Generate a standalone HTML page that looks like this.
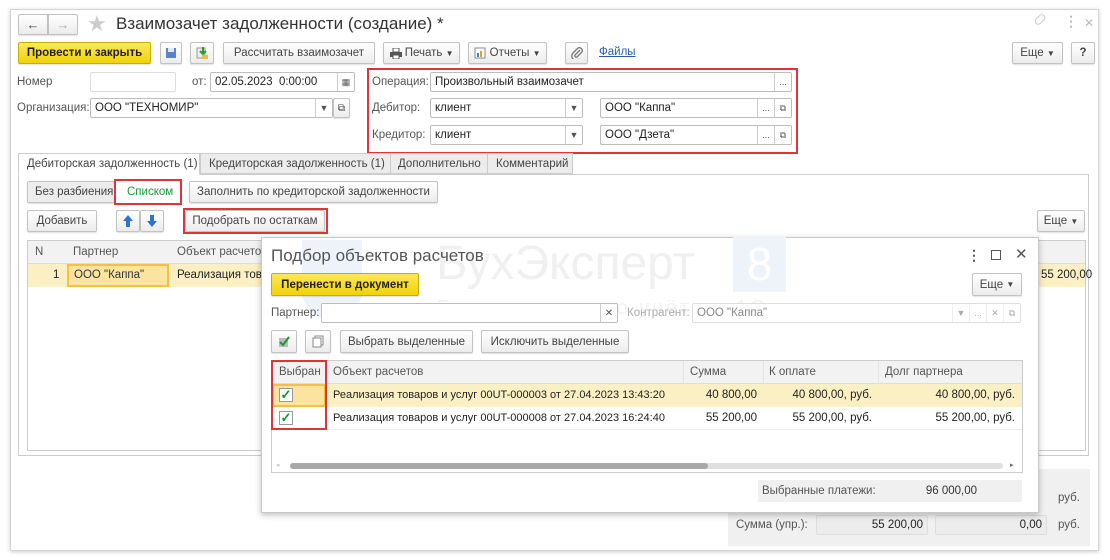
<!DOCTYPE html>
<html><head><meta charset="utf-8"><style>
*{box-sizing:border-box;margin:0;padding:0}
body{width:1110px;height:560px;background:#fff;font-family:"Liberation Sans",Arial,sans-serif;font-size:11px;color:#333;position:relative;overflow:hidden}
.a{position:absolute;white-space:nowrap}
.win{left:10px;top:9px;width:1089px;height:542px;border:1px solid #d4d4d4;background:#fff;box-shadow:0 1px 4px rgba(0,0,0,.2)}
.btn{position:absolute;height:22px;border:1px solid #c2c2c2;border-radius:2px;background:linear-gradient(#fff,#ececec);box-shadow:0 1px 1px rgba(0,0,0,.12);display:flex;align-items:center;justify-content:center;font-size:11.5px;color:#444;white-space:nowrap}
.yel{background:linear-gradient(#fbe95a,#f0d20a);border-color:#c9ad00;color:#222;font-weight:bold}
.inp{position:absolute;height:20px;border:1px solid #bdbdbd;border-radius:2px;background:#fff;padding:3px 4px;font-size:11.5px;color:#222;white-space:nowrap;overflow:hidden}
.lbl{position:absolute;font-size:11.5px;color:#555;white-space:nowrap}
.red{position:absolute;border:2px solid #e0343a}
.sub{position:absolute;top:0;height:100%;border-left:1px solid #ccc;display:flex;align-items:center;justify-content:center;font-size:9px;color:#555;background:#fff}
.th{position:absolute;font-size:11.5px;color:#555;white-space:nowrap}
.td{position:absolute;font-size:11.5px;color:#222;white-space:nowrap}
.cb{position:absolute;width:14px;height:14px;border:1px solid #999;background:#fff;color:#0a9a2a;font-size:13px;line-height:12px;text-align:center;font-weight:bold}
</style></head><body>
<div class="a win"></div>
<div class="btn" style="left:18px;top:14px;width:30px;height:21px;border-radius:2px 0 0 2px;font-size:13px">&#8592;</div>
<div class="btn" style="left:48px;top:14px;width:30px;height:21px;border-radius:0 2px 2px 0;color:#aaa;font-size:13px">&#8594;</div>
<div class="a" style="left:87px;top:11px;font-size:22px;color:#ccc">&#9733;</div>
<div class="a" style="left:116px;top:14px;font-size:17px;color:#333">Взаимозачет задолженности (создание) *</div>
<div class="a" style="left:1034px;top:16px;width:12px;height:7px;border:1.5px solid #ccc;border-radius:4px;transform:rotate(-45deg)"></div>
<div class="a" style="left:1064px;top:13px;font-size:14px;color:#bbb;font-weight:bold">&#8942;</div>
<div class="a" style="left:1084px;top:16px;font-size:12px;color:#bbb">&#10005;</div>
<div class="btn yel" style="left:18px;top:42px;width:133px">Провести и закрыть</div>
<div class="btn" style="left:160px;top:42px;width:22px"><svg width="12" height="12"><rect x="1" y="1" width="10" height="10" fill="#5a84c4"/><rect x="3" y="1" width="6" height="4" fill="#dfe8f5"/></svg></div>
<div class="btn" style="left:190px;top:42px;width:24px"><svg width="14" height="14"><rect x="2" y="2" width="8" height="10" fill="#eee" stroke="#999"/><path d="M8 1v6M5 5l3 3 3-3" stroke="#2a9a30" stroke-width="2" fill="none"/><rect x="7" y="9" width="6" height="4" fill="#e8c040"/></svg></div>
<div class="btn" style="left:223px;top:42px;width:152px">Рассчитать взаимозачет</div>
<div class="btn" style="left:383px;top:42px;width:77px"><svg width="12" height="11"><rect x="3" y="0" width="6" height="4" fill="#fff" stroke="#555"/><rect x="0" y="4" width="12" height="5" fill="#555"/><rect x="3" y="7" width="6" height="4" fill="#fff" stroke="#555"/></svg>&nbsp;Печать&nbsp;<span style="font-size:8px">&#9660;</span></div>
<div class="btn" style="left:468px;top:42px;width:79px"><svg width="12" height="12"><rect x="1" y="1" width="10" height="10" fill="#fff" stroke="#888"/><rect x="3" y="6" width="2" height="4" fill="#4a78b8"/><rect x="6" y="4" width="2" height="6" fill="#e0a020"/></svg>&nbsp;Отчеты&nbsp;<span style="font-size:8px">&#9660;</span></div>
<div class="btn" style="left:565px;top:42px;width:23px"><svg width="12" height="12"><path d="M9 3L4 8a1.5 1.5 0 0 0 2 2l5-5a3 3 0 0 0-4-4L2 6a4 4 0 0 0 6 6" stroke="#777" stroke-width="1.3" fill="none"/></svg></div>
<div class="a" style="left:599px;top:46px;color:#2a5db0;text-decoration:underline;font-size:11.5px">Файлы</div>
<div class="btn" style="left:1012px;top:42px;width:51px">Еще&nbsp;<span style="font-size:8px">&#9660;</span></div>
<div class="btn" style="left:1071px;top:42px;width:24px;font-weight:bold">?</div>
<div class="lbl" style="left:17px;top:76px">Номер</div>
<div class="inp" style="left:90px;top:72px;width:86px;border-color:#ddd"></div>
<div class="lbl" style="left:192px;top:76px">от:</div>
<div class="inp" style="left:210px;top:72px;width:145px">02.05.2023&nbsp;&nbsp;0:00:00<div class="sub" style="right:0;width:17px">&#9638;</div></div>
<div class="lbl" style="left:17px;top:102px">Организация:</div>
<div class="inp" style="left:90px;top:98px;width:243px">ООО "ТЕХНОМИР"<div class="sub" style="right:0;width:17px">&#9660;</div></div>
<div class="btn" style="left:333px;top:98px;width:17px;height:20px;font-size:10px">&#10697;</div>
<div class="red" style="left:367px;top:68px;width:431px;height:86px"></div>
<div class="lbl" style="left:372px;top:76px">Операция:</div>
<div class="inp" style="left:430px;top:72px;width:362px">Произвольный взаимозачет<div class="sub" style="right:0;width:17px">...</div></div>
<div class="lbl" style="left:372px;top:102px">Дебитор:</div>
<div class="inp" style="left:430px;top:98px;width:153px">клиент<div class="sub" style="right:0;width:17px">&#9660;</div></div>
<div class="inp" style="left:600px;top:98px;width:192px">ООО "Каппа"<div class="sub" style="right:17px;width:17px">...</div><div class="sub" style="right:0;width:17px">&#10697;</div></div>
<div class="lbl" style="left:372px;top:129px">Кредитор:</div>
<div class="inp" style="left:430px;top:125px;width:153px">клиент<div class="sub" style="right:0;width:17px">&#9660;</div></div>
<div class="inp" style="left:600px;top:125px;width:192px">ООО "Дзета"<div class="sub" style="right:17px;width:17px">...</div><div class="sub" style="right:0;width:17px">&#10697;</div></div>
<div class="a" style="left:18px;top:174px;width:1071px;height:282px;border:1px solid #ccc"></div>
<div class="a" style="left:18px;top:153px;width:182px;height:22px;border:1px solid #ccc;border-bottom:1px solid #fff;background:#fff;padding:4px 0 0 8px;color:#444;font-size:11.5px">Дебиторская задолженность (1)</div>
<div class="a" style="left:200px;top:153px;width:191px;height:21px;border:1px solid #ccc;background:#ececec;padding:4px 0 0 8px;color:#444;font-size:11.5px">Кредиторская задолженность (1)</div>
<div class="a" style="left:390px;top:153px;width:98px;height:21px;border:1px solid #ccc;background:#ececec;padding:4px 0 0 7px;color:#444;font-size:11.5px">Дополнительно</div>
<div class="a" style="left:487px;top:153px;width:86px;height:21px;border:1px solid #ccc;background:#ececec;padding:4px 0 0 8px;color:#444;font-size:11.5px">Комментарий</div>
<div class="btn" style="left:27px;top:181px;width:153px;justify-content:flex-start;padding-left:7px;background:#ececec">Без разбиения</div>
<div class="a" style="left:115px;top:181px;width:65px;height:22px;background:#fff;color:#1a9a3a;padding:5px 0 0 12px;font-size:11.5px">Списком</div>
<div class="red" style="left:114px;top:179px;width:68px;height:26px"></div>
<div class="btn" style="left:189px;top:181px;width:249px">Заполнить по кредиторской задолженности</div>
<div class="btn" style="left:27px;top:210px;width:70px">Добавить</div>
<div class="btn" style="left:116px;top:210px;width:24px"><svg width="10" height="12"><path d="M5 0L0 6h3v6h4V6h3z" fill="#2c74d0"/></svg></div>
<div class="btn" style="left:140px;top:210px;width:24px"><svg width="10" height="12"><path d="M5 12L0 6h3V0h4v6h3z" fill="#2c74d0"/></svg></div>
<div class="btn" style="left:185px;top:210px;width:140px">Подобрать по остаткам</div>
<div class="red" style="left:183px;top:208px;width:145px;height:26px"></div>
<div class="btn" style="left:1037px;top:210px;width:48px">Еще&nbsp;<span style="font-size:8px">&#9660;</span></div>
<div class="a" style="left:27px;top:240px;width:1059px;height:211px;border:1px solid #ccc"></div>
<div class="a" style="left:28px;top:241px;width:1057px;height:23px;background:#f2f2f2;border-bottom:1px solid #ddd"></div>
<div class="th" style="left:35px;top:246px">N</div>
<div class="th" style="left:73px;top:246px">Партнер</div>
<div class="th" style="left:177px;top:246px">Объект расчетов</div>
<div class="a" style="left:28px;top:264px;width:1057px;height:23px;background:#fbefc4"></div>
<div class="td" style="left:53px;top:269px">1</div>
<div class="a" style="left:67px;top:264px;width:102px;height:23px;border:2px solid #f2c240;background:#fbe3a0;padding:3px 0 0 5px;font-size:11.5px">ООО "Каппа"</div>
<div class="td" style="left:177px;top:269px">Реализация товаров</div>
<div class="td" style="left:1041px;top:269px">55 200,00</div>
<div class="a" style="left:728px;top:469px;width:362px;height:77px;background:#f0f0f0"></div>
<div class="lbl" style="left:1058px;top:492px">руб.</div>
<div class="lbl" style="left:736px;top:519px">Сумма (упр.):</div>
<div class="inp" style="left:816px;top:515px;width:112px;background:#ececec;border-color:#ddd;text-align:right">55 200,00</div>
<div class="inp" style="left:935px;top:515px;width:112px;background:#ececec;border-color:#ddd;text-align:right">0,00</div>
<div class="lbl" style="left:1058px;top:519px">руб.</div>
<!-- dialog -->
<div class="a" style="left:261px;top:237px;width:778px;height:276px;background:#fff;border:1px solid #c8c8c8;box-shadow:0 2px 6px rgba(0,0,0,.25)"></div>
<div class="a" style="left:302px;top:240px;width:60px;height:80px;background:#eef3fa;border-radius:0 0 30px 30px"></div>
<div class="a" style="left:436px;top:236px;font-size:48px;color:#f0f0f0">БухЭксперт</div>
<div class="a" style="left:733px;top:237px;width:53px;height:55px;background:#eef3fa;color:#fff;font-size:46px;text-align:center">8</div>
<div class="a" style="left:437px;top:297px;font-size:20px;color:#f2f2f2;letter-spacing:3px">База ответов по учёту в 1С</div>
<div class="a" style="left:271px;top:246px;font-size:17px;color:#555">Подбор объектов расчетов</div>
<div class="a" style="left:967px;top:247px;font-size:14px;color:#555;font-weight:bold">&#8942;</div>
<div class="a" style="left:991px;top:250px;width:10px;height:10px;border:1.5px solid #555"></div>
<div class="a" style="left:1015px;top:245px;font-size:15px;color:#555">&#10005;</div>
<div class="btn yel" style="left:271px;top:273px;width:148px;height:23px">Перенести в документ</div>
<div class="btn" style="left:972px;top:273px;width:50px;height:23px">Еще&nbsp;<span style="font-size:8px">&#9660;</span></div>
<div class="lbl" style="left:271px;top:307px">Партнер:</div>
<div class="inp" style="left:321px;top:303px;width:297px">&nbsp;<div class="sub" style="right:0;width:17px;font-size:10px">&#10005;</div></div>
<div class="lbl" style="left:627px;top:307px;color:#aaa">Контрагент:</div>
<div class="inp" style="left:692px;top:303px;width:329px;border-color:#ddd;color:#888">ООО "Каппа"<div class="sub" style="right:51px;width:17px;border-color:#eee;color:#aaa">&#9660;</div><div class="sub" style="right:34px;width:17px;border-color:#eee;color:#aaa">...</div><div class="sub" style="right:17px;width:17px;border-color:#eee;color:#aaa">&#10005;</div><div class="sub" style="right:0;width:17px;border-color:#eee;color:#aaa">&#10697;</div></div>
<div class="btn" style="left:271px;top:330px;width:26px;height:23px"><svg width="12" height="13"><rect x="1" y="3" width="9" height="9" fill="#bbb"/><path d="M2 7l3 3 6-8" stroke="#1a9a2a" stroke-width="2" fill="none"/></svg></div>
<div class="btn" style="left:305px;top:330px;width:26px;height:23px"><svg width="12" height="13"><rect x="3" y="1" width="8" height="9" fill="#fff" stroke="#888"/><rect x="1" y="3" width="8" height="9" fill="#fff" stroke="#888"/></svg></div>
<div class="btn" style="left:340px;top:330px;width:133px;height:23px">Выбрать выделенные</div>
<div class="btn" style="left:481px;top:330px;width:148px;height:23px">Исключить выделенные</div>
<div class="a" style="left:271px;top:360px;width:752px;height:113px;border:1px solid #ccc"></div>
<div class="a" style="left:272px;top:361px;width:750px;height:23px;background:#f2f2f2;border-bottom:1px solid #ddd"></div>
<div class="a" style="left:326px;top:361px;width:1px;height:23px;background:#ddd"></div>
<div class="a" style="left:683px;top:361px;width:1px;height:46px;background:#e4e4e4"></div>
<div class="a" style="left:763px;top:361px;width:1px;height:46px;background:#e4e4e4"></div>
<div class="a" style="left:878px;top:361px;width:1px;height:46px;background:#e4e4e4"></div>
<div class="th" style="left:279px;top:366px">Выбран</div>
<div class="th" style="left:333px;top:366px">Объект расчетов</div>
<div class="th" style="left:690px;top:366px">Сумма</div>
<div class="th" style="left:769px;top:366px">К оплате</div>
<div class="th" style="left:885px;top:366px">Долг партнера</div>
<div class="a" style="left:272px;top:384px;width:750px;height:23px;background:#fbefc4"></div>
<div class="a" style="left:272px;top:384px;width:54px;height:23px;border:2px solid #f2c240;background:#fbe3a0"></div>
<div class="a" style="left:272px;top:407px;width:750px;height:23px;border-bottom:1px solid #eee"></div>
<div class="cb" style="left:279px;top:388px">&#10003;</div>
<div class="cb" style="left:279px;top:411px">&#10003;</div>
<div class="td" style="left:333px;top:389px;font-size:11px">Реализация товаров и услуг 00UT-000003 от 27.04.2023 13:43:20</div>
<div class="td" style="left:333px;top:412px;font-size:11px">Реализация товаров и услуг 00UT-000008 от 27.04.2023 16:24:40</div>
<div class="td" style="left:700px;top:389px;width:57px;text-align:right">40 800,00</div>
<div class="td" style="left:700px;top:412px;width:57px;text-align:right">55 200,00</div>
<div class="td" style="left:770px;top:389px;width:102px;text-align:right">40 800,00, руб.</div>
<div class="td" style="left:770px;top:412px;width:102px;text-align:right">55 200,00, руб.</div>
<div class="td" style="left:890px;top:389px;width:125px;text-align:right">40 800,00, руб.</div>
<div class="td" style="left:890px;top:412px;width:125px;text-align:right">55 200,00, руб.</div>
<div class="red" style="left:271px;top:360px;width:56px;height:70px"></div>
<div class="a" style="left:290px;top:463px;width:713px;height:6px;border-radius:3px;background:#e0e0e0"></div>
<div class="a" style="left:290px;top:463px;width:418px;height:6px;border-radius:3px;background:#a8a8a8"></div>
<div class="a" style="left:1010px;top:461px;font-size:7px;color:#666">&#9656;</div>
<div class="a" style="left:276px;top:461px;font-size:7px;color:#ccc">&#9666;</div>
<div class="a" style="left:758px;top:480px;width:264px;height:22px;background:#f0f0f0"></div>
<div class="lbl" style="left:762px;top:485px">Выбранные платежи:</div>
<div class="td" style="left:907px;top:485px;width:70px;text-align:right;color:#333">96 000,00</div>
</body></html>
